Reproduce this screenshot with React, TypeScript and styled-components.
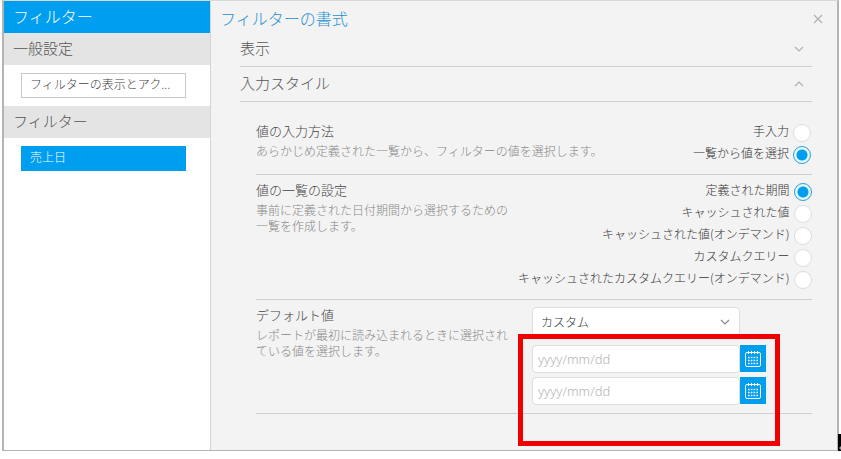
import React, { useState } from "react";
import styled, { createGlobalStyle } from "styled-components";

const blue = "#009eef";
const line = "#d0d0d0";

const GlobalStyle = createGlobalStyle`
  * { box-sizing: border-box; }
  body {
    margin: 0;
    background: #fff;
    color: #555;
    font-family: "Noto Sans CJK JP", "Noto Sans", sans-serif;
    font-size: 12px;
    font-weight: 300;
  }
  button, input, select { font: inherit; }
  h1, h2, h3, p { margin: 0; font-weight: inherit; }
`;

const Page = styled.div`
  position: relative;
  padding: 0 2px 8px;
`;

const Dialog = styled.div`
  display: grid;
  grid-template-columns: 207px minmax(0, 1fr);
  border: solid #b4b4b4;
  border-width: 1px 2px;
  border-top-color: #d8d8d8;
`;

const Sidebar = styled.nav`
  background: #fff;
  border-right: 1px solid #d4d4d4;
`;

const SidebarTitle = styled.h1`
  padding: 0 9px 2px;
  background: ${blue};
  color: #fff;
  font-size: 16px;
  line-height: 30px;
`;

const GroupTitle = styled.h2`
  padding: 0 9px 2px;
  background: #e4e4e4;
  font-size: 15px;
  line-height: 30px;
`;

const GroupBody = styled.div`
  padding: 8px 24px 8px 17px;
`;

const NavButton = styled.button<{ $active?: boolean }>`
  display: block;
  width: 100%;
  height: 25px;
  padding: 0 8px 3px;
  border: 1px solid ${(p) => (p.$active ? blue : "#c8c8c8")};
  background: ${(p) => (p.$active ? blue : "#fff")};
  color: ${(p) => (p.$active ? "#fff" : "#444")};
  line-height: 20px;
  text-align: left;
  white-space: nowrap;
`;

const Panel = styled.main`
  padding: 4px 25px 36px 29px;
  background: #f3f3f3;
`;

const PanelHeader = styled.header`
  display: flex;
  align-items: center;
  justify-content: space-between;
  height: 27px;
  margin: 0 -14px 0 -20px;
`;

const PanelTitle = styled.h2`
  padding-bottom: 2px;
  color: #1f8fd2;
  font-size: 16px;
  line-height: 24px;
`;

const IconButton = styled.button`
  display: flex;
  padding: 3px;
  border: 0;
  background: none;
  color: #b0b0b0;
`;

const AccordionHeader = styled.button`
  display: flex;
  align-items: center;
  justify-content: space-between;
  width: 100%;
  height: 35px;
  padding: 0 8px 0 0;
  border: 0;
  border-bottom: 1px solid ${line};
  background: none;
  color: #555;
  font-size: 15px;
  line-height: 24px;
  text-align: left;

  & > span { padding-bottom: 3px; }
  & > svg { color: #b0b0b0; }
`;

const Sections = styled.div`
  padding: 14px 0 0 16px;
`;

const Section = styled.section`
  display: flex;
  justify-content: space-between;
  padding: 6px 0 8px;
  border-bottom: 1px solid ${line};
`;

const Description = styled.div<{ $narrow?: boolean }>`
  flex: ${(p) => (p.$narrow ? "0 0 262px" : "0 1 auto")};
`;

const SectionTitle = styled.h3`
  color: #444;
  font-size: 13px;
  line-height: 18px;
`;

const Hint = styled.p`
  padding-top: 3px;
  color: #888;
  line-height: 16px;
`;

const RadioList = styled.div`
  display: flex;
  flex-direction: column;
  align-items: flex-end;
  margin-right: 1px;
`;

const RadioLabel = styled.label`
  display: flex;
  align-items: center;
  gap: 4px;
  height: 22px;
  color: #333;
  white-space: nowrap;

  & > span {
    padding-bottom: 4px;
    line-height: 16px;
  }
`;

const Radio = styled.input`
  appearance: none;
  width: 18px;
  height: 18px;
  margin: 0;
  border: 1px solid #ddd;
  border-radius: 50%;
  background: #fff;

  &:checked {
    border-color: #2a9ddc;
    background: radial-gradient(circle, ${blue} 5px, #e6faff 6px);
  }
`;

const Fields = styled.div`
  display: flex;
  flex-direction: column;
  align-items: flex-start;
  gap: 8px;
  flex: 0 0 280px;
  padding-top: 1px;
`;

const SelectWrap = styled.div`
  display: grid;
  width: 208px;
  align-items: center;

  & > * { grid-area: 1 / 1; }
  & > svg {
    justify-self: end;
    margin-right: 10px;
    color: #888;
    pointer-events: none;
  }
`;

const Select = styled.select`
  appearance: none;
  width: 100%;
  height: 30px;
  padding: 0 8px 2px;
  border: 1px solid #ddd;
  border-radius: 4px;
  background: #fff;
  color: #333;
`;

const DateRange = styled.div`
  position: relative;
  display: grid;
  gap: 4px;
`;

const DateRow = styled.div`
  display: flex;
`;

const DateInput = styled.input`
  width: 208px;
  height: 28px;
  padding: 0 5px;
  border: 1px solid #ddd;
  border-radius: 4px;
  background: #fff;
  color: #444;
  font-family: "Noto Sans", sans-serif;
  font-size: 13px;

  &::placeholder { color: #b4b4b4; opacity: 1; }
`;

const CalendarButton = styled.button`
  display: flex;
  align-items: center;
  justify-content: center;
  width: 26px;
  height: 27px;
  padding: 0;
  border: 0;
  background: ${blue};
  color: #fff;
`;

const Highlight = styled.div`
  position: absolute;
  inset: -11px -14px -41px -14px;
  border: 5px solid #f00000;
  pointer-events: none;
`;

const CornerMark = styled.svg`
  position: absolute;
  right: 0;
  bottom: 8px;
`;

function Chevron({ up }: { up?: boolean }) {
  return (
    <svg width="10" height="8" viewBox="0 0 10 8" fill="none" stroke="currentColor" strokeWidth="1.2" aria-hidden="true">
      <path d={up ? "M1 6l4-4 4 4" : "M1 2l4 4 4-4"} />
    </svg>
  );
}

function CalendarIcon() {
  return (
    <svg width="18" height="18" viewBox="0 0 18 18" fill="none" stroke="currentColor" aria-hidden="true">
      <rect x="1.5" y="2.5" width="15" height="14" rx="1.5" />
      <path d="M4.500 1v3M7.500 1v3M10.500 1v3M13.500 1v3" />
      <path d="M4 7.500h10M4 10.500h10M4 13.500h10" strokeWidth="1.6" strokeDasharray="1.6 1.2" />
    </svg>
  );
}

type RadioGroupProps = { name: string; label: string; options: string[]; initial: string };

function RadioGroup({ name, label, options, initial }: RadioGroupProps) {
  const [value, setValue] = useState(initial);
  return (
    <RadioList role="radiogroup" aria-label={label}>
      {options.map((option) => (
        <RadioLabel key={option}>
          <span>{option}</span>
          <Radio type="radio" name={name} checked={value === option} onChange={() => setValue(option)} />
        </RadioLabel>
      ))}
    </RadioList>
  );
}

function DateField({ label }: { label: string }) {
  return (
    <DateRow>
      <DateInput type="text" placeholder="yyyy/mm/dd" aria-label={label} />
      <CalendarButton type="button" aria-label={label}>
        <CalendarIcon />
      </CalendarButton>
    </DateRow>
  );
}

export default function App() {
  return (
    <Page>
      <GlobalStyle />
      <Dialog>
        <Sidebar>
          <SidebarTitle>フィルター</SidebarTitle>
          <GroupTitle>一般設定</GroupTitle>
          <GroupBody>
            <NavButton type="button">フィルターの表示とアク...</NavButton>
          </GroupBody>
          <GroupTitle>フィルター</GroupTitle>
          <GroupBody>
            <NavButton type="button" $active>売上日</NavButton>
          </GroupBody>
        </Sidebar>
        <Panel>
          <PanelHeader>
            <PanelTitle>フィルターの書式</PanelTitle>
            <IconButton type="button" aria-label="閉じる">
              <svg width="10" height="10" viewBox="0 0 10 10" stroke="currentColor" strokeWidth="1.2" aria-hidden="true">
                <path d="M1 1l8 8M9 1l-8 8" />
              </svg>
            </IconButton>
          </PanelHeader>
          <AccordionHeader type="button" aria-expanded={false}>
            <span>表示</span>
            <Chevron />
          </AccordionHeader>
          <AccordionHeader type="button" aria-expanded>
            <span>入力スタイル</span>
            <Chevron up />
          </AccordionHeader>
          <Sections>
            <Section>
              <Description>
                <SectionTitle>値の入力方法</SectionTitle>
                <Hint>あらかじめ定義された一覧から、フィルターの値を選択します。</Hint>
              </Description>
              <RadioGroup name="method" label="値の入力方法" options={["手入力", "一覧から値を選択"]} initial="一覧から値を選択" />
            </Section>
            <Section>
              <Description $narrow>
                <SectionTitle>値の一覧の設定</SectionTitle>
                <Hint>事前に定義された日付期間から選択するための一覧を作成します。</Hint>
              </Description>
              <RadioGroup
                name="source"
                label="値の一覧の設定"
                options={[
                  "定義された期間",
                  "キャッシュされた値",
                  "キャッシュされた値(オンデマンド)",
                  "カスタムクエリー",
                  "キャッシュされたカスタムクエリー(オンデマンド)",
                ]}
                initial="定義された期間"
              />
            </Section>
            <Section>
              <Description $narrow>
                <SectionTitle>デフォルト値</SectionTitle>
                <Hint>レポートが最初に読み込まれるときに選択されている値を選択します。</Hint>
              </Description>
              <Fields>
                <SelectWrap>
                  <Select aria-label="デフォルト値" defaultValue="カスタム">
                    <option>カスタム</option>
                  </Select>
                  <Chevron />
                </SelectWrap>
                <DateRange>
                  <DateField label="開始日" />
                  <DateField label="終了日" />
                  <Highlight />
                </DateRange>
              </Fields>
            </Section>
          </Sections>
        </Panel>
      </Dialog>
      <CornerMark width="3" height="17" viewBox="0 0 3 17" aria-hidden="true">
        <path d="M0 0h3v17H0z" fill="#000" />
        <path d="M1 14l2-2v4z" fill="#999" />
      </CornerMark>
    </Page>
  );
}
